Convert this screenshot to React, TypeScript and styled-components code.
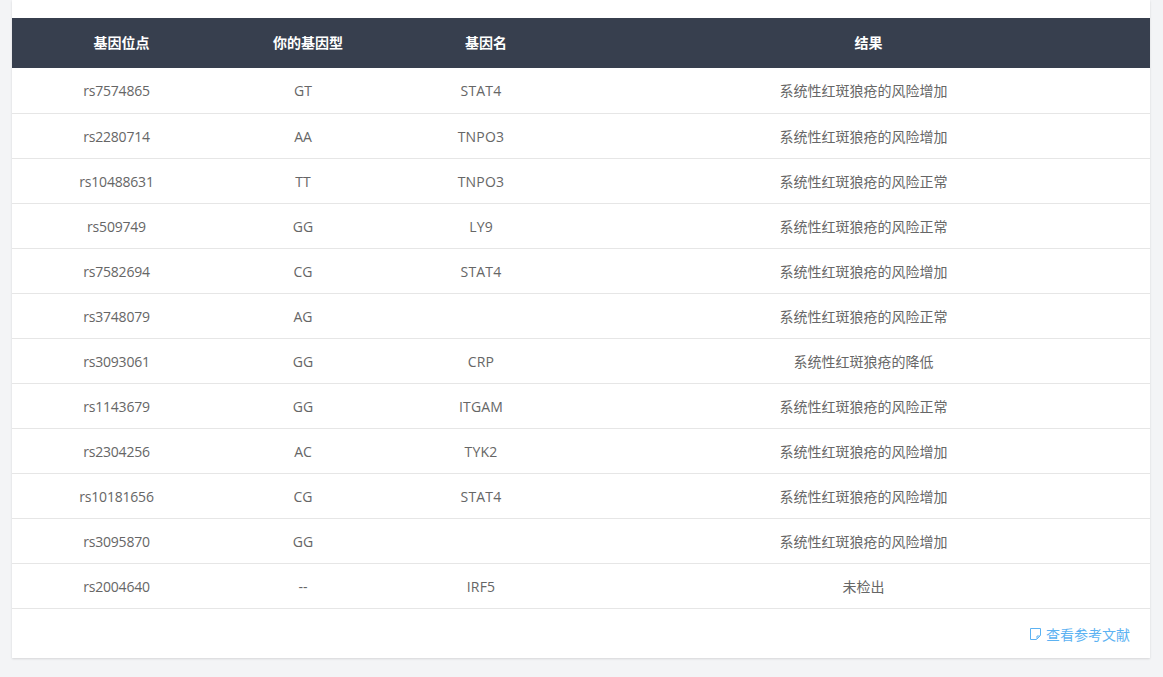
import React from "react";
import styled, { createGlobalStyle } from "styled-components";

const GlobalStyle = createGlobalStyle`
	html, body {
		margin: 0;
		padding: 0;
		background: #f3f4f6;
		font-family: "Open Sans", "Noto Sans CJK SC", sans-serif;
	}
`;

const Page = styled.div`
	height: 677px;
	overflow: hidden;
	padding: 0 13px 0 12px;
	box-sizing: border-box;
`;

const Card = styled.div`
	background: #fff;
	padding-top: 18px;
	box-shadow: 0 1px 2px rgba(0, 0, 0, 0.12);
`;

const Table = styled.table`
	width: 100%;
	border-collapse: collapse;
	table-layout: fixed;
	font-size: 14px;
`;

const HeadRow = styled.tr`
	height: 50px;
	background: #373f4e;
`;

const HeadCell = styled.th`
	padding: 0 0 2px 10px;
	color: #fff;
	font-size: 14px;
	font-weight: 700;
	text-align: center;
`;

const Row = styled.tr`
	height: 45px;
	border-bottom: 1px solid #e6e6e6;
`;

const Cell = styled.td`
	padding: 0;
	color: #666;
	text-align: center;
`;

// latin cells sit a pixel lower than the chinese ones, except in the first row
const CodeCell = styled(Cell)<{ $first: boolean; $spacing: number }>`
	padding-top: ${(p) => (p.$first ? 0 : 2)}px;
	letter-spacing: ${(p) => p.$spacing}px;
`;

const Footer = styled.div`
	display: flex;
	justify-content: flex-end;
	height: 49px;
	padding: 16px 20px 0 0;
	box-sizing: border-box;
`;

const RefLink = styled.a`
	display: flex;
	align-items: center;
	gap: 5px;
	height: 18px;
	color: #5cb2f2;
	font-size: 14px;
	cursor: pointer;
`;

const rows = [
	["rs7574865", "GT", "STAT4", "系统性红斑狼疮的风险增加"],
	["rs2280714", "AA", "TNPO3", "系统性红斑狼疮的风险增加"],
	["rs10488631", "TT", "TNPO3", "系统性红斑狼疮的风险正常"],
	["rs509749", "GG", "LY9", "系统性红斑狼疮的风险正常"],
	["rs7582694", "CG", "STAT4", "系统性红斑狼疮的风险增加"],
	["rs3748079", "AG", "", "系统性红斑狼疮的风险正常"],
	["rs3093061", "GG", "CRP", "系统性红斑狼疮的降低"],
	["rs1143679", "GG", "ITGAM", "系统性红斑狼疮的风险正常"],
	["rs2304256", "AC", "TYK2", "系统性红斑狼疮的风险增加"],
	["rs10181656", "CG", "STAT4", "系统性红斑狼疮的风险增加"],
	["rs3095870", "GG", "", "系统性红斑狼疮的风险增加"],
	["rs2004640", "--", "IRF5", "未检出"],
];

function NoteIcon() {
	return (
		<svg width="11" height="12" viewBox="0 0 11 12" fill="none" stroke="currentColor" strokeWidth="1" strokeLinejoin="miter">
			<path d="M0.5 0.5H10.5V7.5L6.5 11.5H0.5Z" />
			<path d="M10 8H7V11" />
		</svg>
	);
}

export default function App() {
	return (
		<Page>
			<GlobalStyle />
			<Card>
				<Table>
					<colgroup>
						<col style={{ width: 209 }} />
						<col style={{ width: 164 }} />
						<col style={{ width: 192 }} />
						<col />
					</colgroup>
					<thead>
						<HeadRow>
							<HeadCell>基因位点</HeadCell>
							<HeadCell>你的基因型</HeadCell>
							<HeadCell>基因名</HeadCell>
							<HeadCell>结果</HeadCell>
						</HeadRow>
					</thead>
					<tbody>
						{rows.map((r, i) => (
							<Row key={r[0]}>
								<CodeCell $first={i === 0} $spacing={-0.2}>{r[0]}</CodeCell>
								<CodeCell $first={i === 0} $spacing={0}>{r[1]}</CodeCell>
								<CodeCell $first={i === 0} $spacing={0.2}>{r[2]}</CodeCell>
								<Cell>{r[3]}</Cell>
							</Row>
						))}
					</tbody>
				</Table>
				<Footer>
					<RefLink>
						<NoteIcon />
						查看参考文献
					</RefLink>
				</Footer>
			</Card>
		</Page>
	);
}
